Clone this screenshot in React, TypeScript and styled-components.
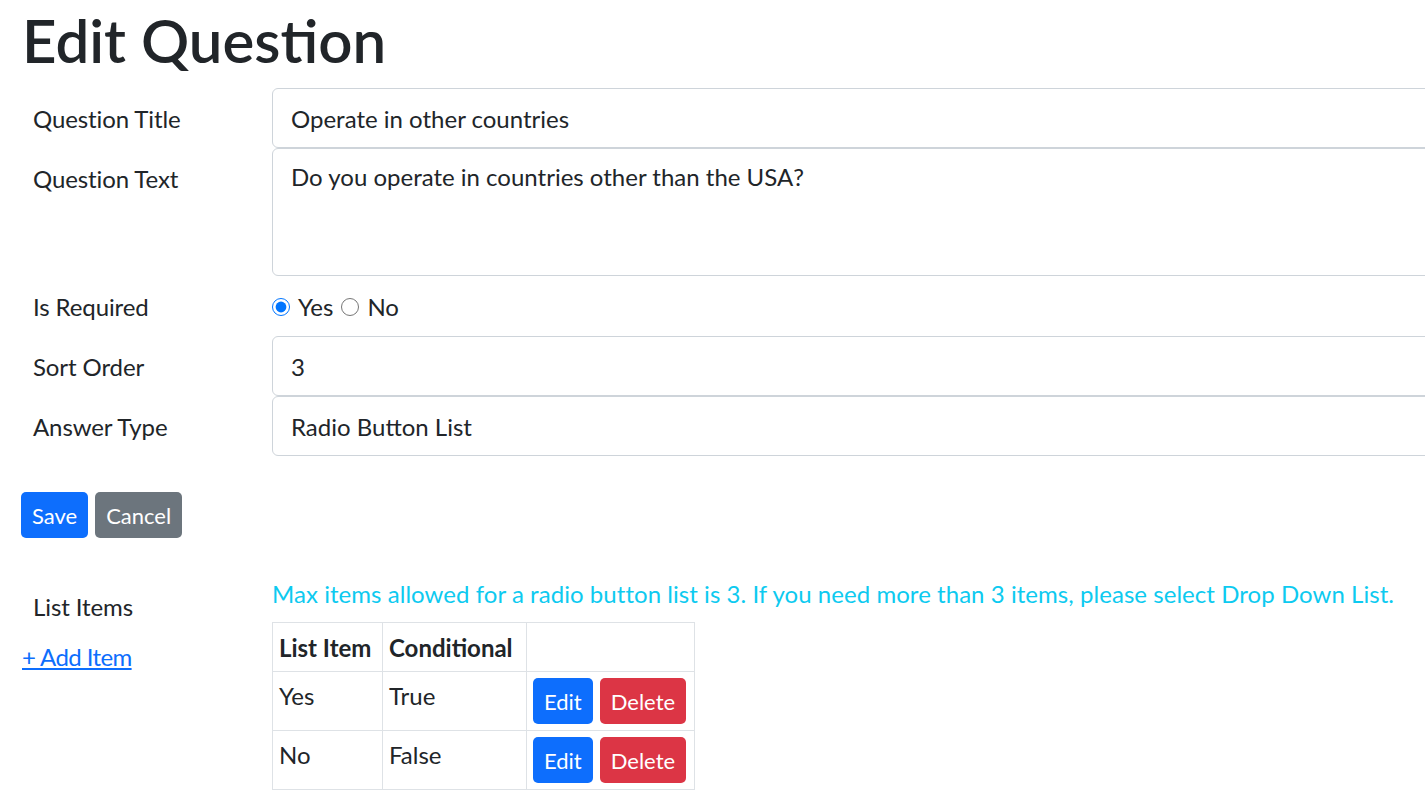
import React from "react";
import styled, { createGlobalStyle } from "styled-components";

const GlobalStyle = createGlobalStyle`
  *, *::before, *::after { box-sizing: border-box; }
  html, body { margin: 0; padding: 0; overflow: hidden; background: #fff; }
  body {
    font-family: Lato, "Segoe UI", "Noto Sans", sans-serif;
    color: #212529;
    font-size: 24px;
    line-height: 1.5;
  }
`;

const Page = styled.div`
  width: 1560px;
  padding: 4px 0 0 22px;
`;

const Heading = styled.h1`
  margin: 0 0 12px;
  font-size: 60px;
  line-height: 72px;
  font-weight: 600;
  color: #212529;
`;

const Form = styled.div`
  display: grid;
  grid-template-columns: 250px 1fr;
`;

const Label = styled.div`
  padding: 13px 0 0 11px;
  line-height: 36px;
  font-size: 24px;
  letter-spacing: -0.1px;
`;

const Field = styled.div`
  display: flex;
  align-items: center;
  min-height: 60px;
`;

const TextInput = styled.input`
  width: 100%;
  height: 60px;
  border: 1px solid #ced4da;
  border-radius: 6px;
  padding: 0 18px;
  font: inherit;
  color: #212529;
  background: #fff;
  outline: none;
`;

const TextArea = styled.textarea`
  width: 100%;
  height: 128px;
  border: 1px solid #ced4da;
  border-radius: 6px;
  padding: 10px 18px;
  font: inherit;
  color: #212529;
  resize: none;
  display: block;
  outline: none;
`;

const RadioGroup = styled.div`
  display: flex;
  align-items: center;
  height: 60px;
  gap: 8px;
  padding-top: 2px;
`;

const Radio = styled.input`
  width: 18px;
  height: 18px;
  margin: 0;
`;

const RadioText = styled.label`
  line-height: 36px;
`;

const Actions = styled.div`
  display: flex;
  gap: 7px;
  margin: 36px 0 0 -1px;
`;

const Button = styled.button<{ $variant: "primary" | "secondary" | "danger" }>`
  height: 46px;
  padding: 0 11px;
  border: none;
  border-radius: 5px;
  font-family: inherit;
  font-size: 22px;
  color: #fff;
  cursor: pointer;
  background: ${(p) =>
    p.$variant === "primary" ? "#0d6efd" : p.$variant === "danger" ? "#dc3545" : "#6c757d"};
`;

const ListSection = styled.div`
  display: grid;
  grid-template-columns: 250px 1fr;
  margin-top: 38px;
`;

const LeftCol = styled.div`
  display: flex;
  flex-direction: column;
  align-items: flex-start;
`;

const AddLink = styled.a`
  margin: 14px 0 0 0;
  line-height: 36px;
  color: #0d6efd;
  text-decoration: underline;
  letter-spacing: -0.6px;
  cursor: pointer;
`;

const Info = styled.div`
  color: #0dcaf0;
  line-height: 36px;
  margin-bottom: 10px;
  letter-spacing: 0.05px;
`;

const Table = styled.table`
  border-collapse: collapse;
  border: 1px solid #dee2e6;
`;

const Th = styled.th<{ $w: number }>`
  width: ${(p) => p.$w}px;
  border: 1px solid #dee2e6;
  padding: 7px 6px 5px;
  text-align: left;
  font-weight: 700;
  line-height: 36px;
  vertical-align: top;
`;

const Td = styled.td`
  border: 1px solid #dee2e6;
  padding: 6px;
  line-height: 36px;
  vertical-align: top;
`;

const CellButtons = styled.div`
  display: flex;
  gap: 7px;
`;

const items = [
  { label: "Yes", cond: "True" },
  { label: "No", cond: "False" },
];

export default function App() {
  return (
    <>
      <GlobalStyle />
      <Page>
        <Heading>Edit Question</Heading>
        <Form>
          <Label>Question Title</Label>
          <Field>
            <TextInput defaultValue="Operate in other countries" />
          </Field>
          <Label>Question Text</Label>
          <Field>
            <TextArea defaultValue="Do you operate in countries other than the USA?" />
          </Field>
          <Label>Is Required</Label>
          <RadioGroup>
            <Radio type="radio" name="req" id="ry" defaultChecked />
            <RadioText htmlFor="ry">Yes</RadioText>
            <Radio type="radio" name="req" id="rn" />
            <RadioText htmlFor="rn">No</RadioText>
          </RadioGroup>
          <Label>Sort Order</Label>
          <Field>
            <TextInput defaultValue="3" />
          </Field>
          <Label>Answer Type</Label>
          <Field>
            <TextInput defaultValue="Radio Button List" />
          </Field>
        </Form>
        <Actions>
          <Button $variant="primary">Save</Button>
          <Button $variant="secondary">Cancel</Button>
        </Actions>
        <ListSection>
          <LeftCol>
            <Label>List Items</Label>
            <AddLink>+ Add Item</AddLink>
          </LeftCol>
          <div>
            <Info>
              Max items allowed for a radio button list is 3. If you need more than 3 items, please select Drop Down List.
            </Info>
            <Table>
              <thead>
                <tr>
                  <Th $w={110}>List Item</Th>
                  <Th $w={144}>Conditional</Th>
                  <Th $w={168}></Th>
                </tr>
              </thead>
              <tbody>
                {items.map((it) => (
                  <tr key={it.label}>
                    <Td>{it.label}</Td>
                    <Td>{it.cond}</Td>
                    <Td>
                      <CellButtons>
                        <Button $variant="primary">Edit</Button>
                        <Button $variant="danger">Delete</Button>
                      </CellButtons>
                    </Td>
                  </tr>
                ))}
              </tbody>
            </Table>
          </div>
        </ListSection>
      </Page>
    </>
  );
}
